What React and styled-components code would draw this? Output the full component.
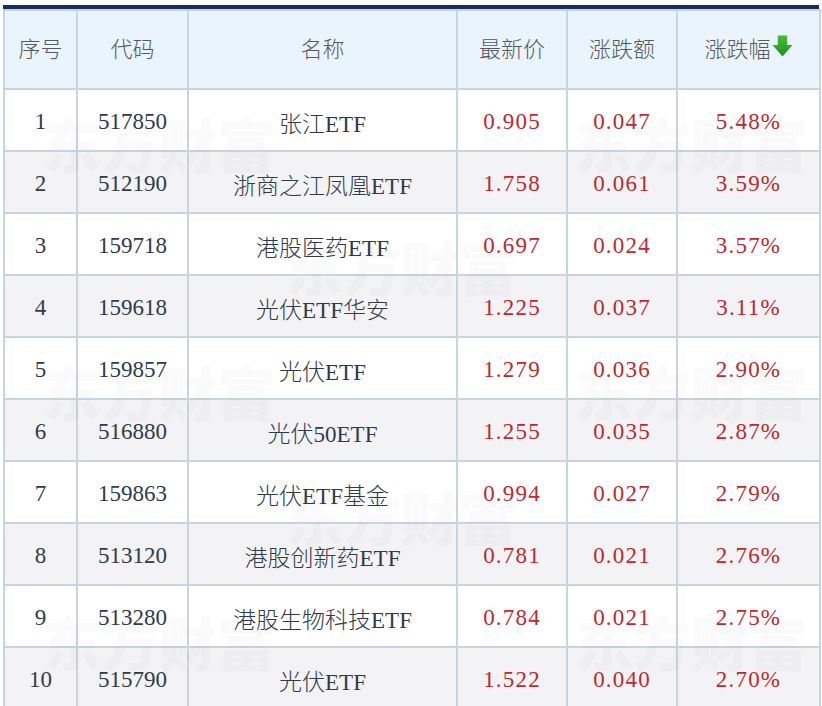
import React from "react";
import styled, { createGlobalStyle } from "styled-components";

const GlobalStyle = createGlobalStyle`
  html, body {
    margin: 0;
    padding: 0;
    background: #ffffff;
  }
  body {
    font-family: "Liberation Serif", "Noto Sans CJK SC", serif;
  }
`;

const Page = styled.div`
  width: 822px;
  height: 706px;
  overflow: hidden;
  padding: 5px 0 0 3px;
  box-sizing: border-box;
`;

const Frame = styled.div`
  position: relative;
  width: 816px;
  border-top: 4px solid #1d2d5a;
`;

const Table = styled.table`
  width: 816px;
  table-layout: fixed;
  border-collapse: collapse;
  border: 2px solid #c6d5e2;
`;

const Head = styled.th`
  height: 71px;
  padding: 0 0 6px;
  background: #eaf4fd;
  border: 2px solid #c6d5e2;
  color: #555a60;
  font-family: "Noto Sans CJK SC", sans-serif;
  font-weight: 300;
  font-size: 22px;
  text-align: center;
  white-space: nowrap;
`;

const Row = styled.tr`
  background: ${(p) => (p.$odd ? "#ffffff" : "#f3f3f5")};
`;

const Cell = styled.td`
  height: 57px;
  padding: 3px 0 0;
  border: 2px solid #c6d5e2;
  text-align: center;
  color: ${(p) => (p.$red ? "#bd2a2f" : "#2f3b4c")};
  font-size: 23px;
  letter-spacing: ${(p) => (p.$red ? "1.2px" : "0")};
  white-space: nowrap;
`;

const Name = styled.span`
  font-family: "Liberation Serif", "Noto Sans CJK SC", serif;
  font-weight: 300;
`;

const Arrow = styled.svg`
  width: 21px;
  height: 24px;
  vertical-align: -1px;
  margin-left: 1px;
`;

const Watermark = styled.div`
  position: absolute;
  left: 0;
  top: 0;
  width: 816px;
  height: 700px;
  overflow: hidden;
  pointer-events: none;
`;

const MarkLine = styled.div`
  position: absolute;
  left: ${(p) => p.$x}px;
  top: ${(p) => p.$y}px;
  display: flex;
  gap: 300px;
  white-space: nowrap;
  font-family: "Noto Sans CJK SC", sans-serif;
  font-weight: 900;
  font-size: 58px;
  color: rgba(90, 90, 90, 0.028);
`;

const rows = [
  ["1", "517850", "张江ETF", "0.905", "0.047", "5.48%"],
  ["2", "512190", "浙商之江凤凰ETF", "1.758", "0.061", "3.59%"],
  ["3", "159718", "港股医药ETF", "0.697", "0.024", "3.57%"],
  ["4", "159618", "光伏ETF华安", "1.225", "0.037", "3.11%"],
  ["5", "159857", "光伏ETF", "1.279", "0.036", "2.90%"],
  ["6", "516880", "光伏50ETF", "1.255", "0.035", "2.87%"],
  ["7", "159863", "光伏ETF基金", "0.994", "0.027", "2.79%"],
  ["8", "513120", "港股创新药ETF", "0.781", "0.021", "2.76%"],
  ["9", "513280", "港股生物科技ETF", "0.784", "0.021", "2.75%"],
  ["10", "515790", "光伏ETF", "1.522", "0.040", "2.70%"],
];

const marks = [
  { x: 40, y: 92 },
  { x: -250, y: 215 },
  { x: 40, y: 340 },
  { x: -250, y: 465 },
  { x: 40, y: 590 },
];

function DownArrow() {
  return (
    <Arrow viewBox="0 0 20 22">
      <defs>
        <linearGradient id="ga" x1="0" y1="0" x2="0" y2="1">
          <stop offset="0" stopColor="#4cbb3a" />
          <stop offset="1" stopColor="#1f8f1f" />
        </linearGradient>
      </defs>
      <path d="M5.5 1h9v9h5L10 21 0.5 10h5z" fill="url(#ga)" />
    </Arrow>
  );
}

export default function App() {
  return (
    <Page>
      <GlobalStyle />
      <Frame>
        <Table>
          <colgroup>
            <col style={{ width: 73 }} />
            <col style={{ width: 111 }} />
            <col style={{ width: 269 }} />
            <col style={{ width: 110 }} />
            <col style={{ width: 110 }} />
            <col style={{ width: 143 }} />
          </colgroup>
          <thead>
            <tr>
              <Head>序号</Head>
              <Head>代码</Head>
              <Head>名称</Head>
              <Head>最新价</Head>
              <Head>涨跌额</Head>
              <Head>
                涨跌幅
                <DownArrow />
              </Head>
            </tr>
          </thead>
          <tbody>
            {rows.map((r, i) => (
              <Row key={r[1] + i} $odd={i % 2 === 0}>
                <Cell>{r[0]}</Cell>
                <Cell>{r[1]}</Cell>
                <Cell>
                  <Name>{r[2]}</Name>
                </Cell>
                <Cell $red>{r[3]}</Cell>
                <Cell $red>{r[4]}</Cell>
                <Cell $red>{r[5]}</Cell>
              </Row>
            ))}
          </tbody>
        </Table>
        <Watermark aria-hidden="true">
          {marks.map((m) => (
            <MarkLine key={m.y} $x={m.x} $y={m.y}>
              <span>东方财富</span>
              <span>东方财富</span>
              <span>东方财富</span>
            </MarkLine>
          ))}
        </Watermark>
      </Frame>
    </Page>
  );
}
